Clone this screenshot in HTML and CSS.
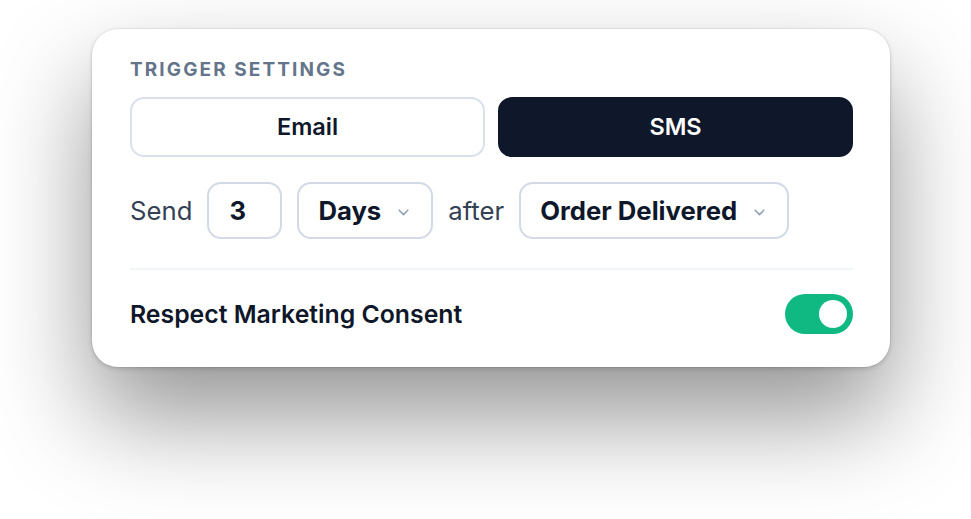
FILE: index.html
```html
<!DOCTYPE html>
<html>
<head>
<meta charset="utf-8">
<link rel="stylesheet" href="styles.css">
</head>
<body>
<div class="card">
  <div class="label">TRIGGER SETTINGS</div>
  <div class="tabs">
    <div class="tab">Email</div>
    <div class="tab active">SMS</div>
  </div>
  <div class="row">
    <span class="word">Send</span>
    <div class="box num">3</div>
    <div class="box select">Days<svg class="chev" viewBox="0 0 11 7" width="11" height="7"><path d="M1.2 1.2 L5.5 5.6 L9.8 1.2" fill="none" stroke="#94a3b8" stroke-width="1.6" stroke-linecap="round" stroke-linejoin="round"/></svg></div>
    <span class="word">after</span>
    <div class="box select">Order Delivered<svg class="chev" viewBox="0 0 11 7" width="11" height="7"><path d="M1.2 1.2 L5.5 5.6 L9.8 1.2" fill="none" stroke="#94a3b8" stroke-width="1.6" stroke-linecap="round" stroke-linejoin="round"/></svg></div>
  </div>
  <div class="divider"></div>
  <div class="consent">
    <span class="consent-text">Respect Marketing Consent</span>
    <div class="toggle"><div class="knob"></div></div>
  </div>
</div>
</body>
</html>
```
FILE: styles.css
```css
html, body { margin: 0; background: #ffffff; }
html { height: 100%; }
body {
  font-family: Inter, "Noto Sans", sans-serif;
  padding: 29px 0 0 92px;
  min-height: 100%;
  box-sizing: border-box;
  color: #0f172a;
}
.card {
  width: 798px;
  box-sizing: border-box;
  background: #fff;
  border-radius: 26px;
  padding: 29px 37px 33px 38px;
  box-shadow: 0 0 0 1px rgba(0,0,0,0.05), 0 2px 5px rgba(0,0,0,0.14), 0 50px 100px rgba(0,0,0,0.42);
}
.label {
  font-size: 19px;
  line-height: 24px;
  font-weight: 700;
  letter-spacing: 2.1px;
  color: #64748b;
  margin-bottom: 15px;
}
.tabs {
  display: grid;
  grid-template-columns: 1fr 1fr;
  gap: 13px;
}
.tab {
  height: 60px;
  box-sizing: border-box;
  border: 2px solid #dbe1ea;
  border-radius: 14px;
  display: flex;
  align-items: center;
  justify-content: center;
  font-size: 23.5px;
  font-weight: 600;
  color: #0f172a;
  padding-bottom: 1px;
}
.tab.active {
  background: #0f172a;
  border-color: #0f172a;
  color: #fff;
}
.row {
  display: flex;
  align-items: center;
  gap: 15px;
  margin-top: 25px;
  height: 57px;
}
.word {
  font-size: 25.7px;
  color: #334155;
}
.box {
  height: 57px;
  box-sizing: border-box;
  border: 2px solid #d3dae6;
  border-radius: 14px;
  display: flex;
  align-items: center;
  font-size: 25.7px;
  font-weight: 700;
  color: #0f172a;
}
.num {
  width: 75px;
  padding-left: 20px;
}
.select {
  padding: 0 22px 0 19px;
  gap: 17px;
}
.chev { display: block; margin-top: 3px; }
.divider {
  height: 2px;
  background: #f1f5f9;
  margin: 29px 0 24px;
}
.consent {
  display: flex;
  align-items: center;
  justify-content: space-between;
  height: 40px;
}
.consent-text {
  font-size: 24.8px;
  font-weight: 600;
  color: #0f172a;
}
.toggle {
  width: 68px;
  height: 40px;
  border-radius: 20px;
  background: #10b981;
  display: flex;
  align-items: center;
  justify-content: flex-end;
  padding-right: 6px;
  box-sizing: border-box;
}
.knob {
  width: 28px;
  height: 28px;
  border-radius: 50%;
  background: #fff;
}
```
